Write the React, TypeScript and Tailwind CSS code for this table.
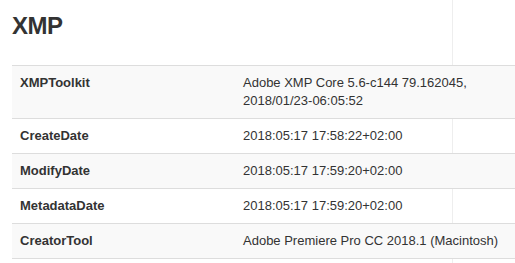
import React from 'react';

const rows: [string, string[]][] = [
  ['XMPToolkit', ['Adobe XMP Core 5.6-c144 79.162045,', '2018/01/23-06:05:52']],
  ['CreateDate', ['2018:05:17 17:58:22+02:00']],
  ['ModifyDate', ['2018:05:17 17:59:20+02:00']],
  ['MetadataDate', ['2018:05:17 17:59:20+02:00']],
  ['CreatorTool', ['Adobe Premiere Pro CC 2018.1 (Macintosh)']],
];

export default function App() {
  return (
    <div className="relative min-h-screen bg-white text-[#333] font-['Liberation_Sans',Arial,sans-serif]">
      {/* sidebar edge behind the table */}
      <div className="absolute top-0 bottom-0 left-[452px] w-px bg-[#eeeeee]" />

      <div className="relative z-10 pl-3">
        <h2 className="pt-[13px] text-[24px] leading-[26px] font-bold tracking-[-0.5px]">XMP</h2>

        <table className="mt-[26px] w-full border-collapse text-[13px] leading-[18px] border-b border-[#dddddd]">
          <tbody>
            {rows.map(([key, value], i) => (
              <tr key={key} className={i % 2 === 0 ? 'bg-[#f9f9f9]' : ''}>
                <td className="w-[223px] border-t border-[#dddddd] p-2 align-top font-bold">{key}</td>
                <td className="border-t border-[#dddddd] p-2 align-top">
                  {value.map((line) => (
                    <div key={line}>{line}</div>
                  ))}
                </td>
              </tr>
            ))}
          </tbody>
        </table>
      </div>
    </div>
  );
}
